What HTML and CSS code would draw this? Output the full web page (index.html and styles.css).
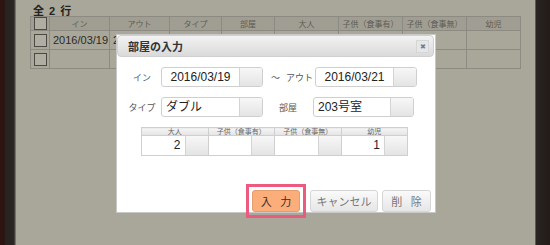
FILE: index.html
```html
<!DOCTYPE html>
<html lang="ja">
<head>
  <meta charset="UTF-8" />
  <meta name="viewport" content="width=device-width, initial-scale=1.0" />
  <title>部屋の入力</title>
  <link rel="stylesheet" href="styles.css">
</head>
<body>
  <div class="frame-left"></div>
  <div class="main">
    <h1 class="count">全 2 行</h1>
    <table class="list">
      <tr>
        <th class="chk"><span class="box"></span></th>
        <th>イン</th>
        <th>アウト</th>
        <th>タイプ</th>
        <th>部屋</th>
        <th>大人</th>
        <th>子供（食事有）</th>
        <th>子供（食事無）</th>
        <th>幼児</th>
      </tr>
      <tr>
        <td class="chk"><span class="box"></span></td>
        <td>2016/03/19</td>
        <td>2016/03/21</td>
        <td></td><td></td><td></td><td></td><td></td><td></td>
      </tr>
      <tr>
        <td class="chk"><span class="box"></span></td>
        <td></td><td></td><td></td><td></td><td></td><td></td><td></td><td></td>
      </tr>
    </table>
  </div>
  <div class="frame-right"></div>

  <div class="dialog">
    <div class="titlebar">
      <span class="title">部屋の入力</span>
      <span class="close">&#x2716;</span>
    </div>
    <div class="dialog-body">
      <div class="row">
        <label class="lbl">イン</label>
        <div class="field">
          <span class="val center">2016/03/19</span>
          <span class="btn-part"></span>
        </div>
        <span class="mid"><span class="tilde">～</span> アウト</span>
        <div class="field">
          <span class="val center">2016/03/21</span>
          <span class="btn-part"></span>
        </div>
      </div>
      <div class="row">
        <label class="lbl">タイプ</label>
        <div class="field">
          <span class="val">ダブル</span>
          <span class="btn-part"></span>
        </div>
        <span class="mid center-lbl">部屋</span>
        <div class="field narrow">
          <span class="val">203号室</span>
          <span class="btn-part"></span>
        </div>
      </div>

      <table class="people">
        <tr>
          <th>大人</th>
          <th>子供（食事有）</th>
          <th>子供（食事無）</th>
          <th>幼児</th>
        </tr>
        <tr>
          <td><div class="num"><span class="nval">2</span><span class="btn-part"></span></div></td>
          <td><div class="num"><span class="nval"></span><span class="btn-part"></span></div></td>
          <td><div class="num"><span class="nval"></span><span class="btn-part"></span></div></td>
          <td><div class="num"><span class="nval">1</span><span class="btn-part"></span></div></td>
        </tr>
      </table>

      <div class="buttons">
        <span class="focus-ring"><button class="btn primary">入 力</button></span>
        <button class="btn cancel">キャンセル</button>
        <button class="btn">削 除</button>
      </div>
    </div>
  </div>
</body>
</html>
```

FILE: styles.css
```css
body {
  margin: 0;
  width: 550px;
  height: 245px;
  overflow: hidden;
  display: flex;
  background-color: #a9a799;
  font-family: "Liberation Sans", "Noto Sans CJK JP", sans-serif;
  color: #2b2a26;
}
.frame-left {
  width: 16px;
  background: linear-gradient(to right, #2c1410 0, #2c1410 5px, #252220 5px, #2a2725 14px, #5a5850 15px, #8f8d82 16px);
}
.frame-right {
  width: 15px;
  background: linear-gradient(to right, #8f8d82 0, #2a2422 1px, #231b17 15px);
}
.main {
  flex: 1;
  padding-left: 14px;
}
.count {
  margin: 0;
  padding: 6px 0 0 3px;
  height: 10px;
  font-size: 11px;
  line-height: 10px;
  font-weight: bold;
  color: #24231f;
  letter-spacing: 1px;
}
.list {
  border-collapse: collapse;
  width: 491px;
  table-layout: fixed;
}
.list th, .list td {
  border: 1px solid #8d8b81;
  padding: 0;
  overflow: hidden;
  white-space: nowrap;
}
.list th {
  height: 12px;
  font-size: 8px;
  font-weight: normal;
  color: #5e5c55;
  background-color: #a09e92;
}
.list td {
  height: 18px;
  font-size: 11px;
  padding-left: 3px;
  background-color: #a9a799;
}
.list th:nth-child(1) { width: 18px; }
.list th:nth-child(2) { width: 59px; }
.list th:nth-child(3) { width: 59px; }
.list th:nth-child(4) { width: 51px; }
.list th:nth-child(5) { width: 52px; }
.list th:nth-child(6) { width: 63px; }
.list th:nth-child(7) { width: 63px; }
.list th:nth-child(8) { width: 63px; }
.list .chk {
  padding: 0;
  text-align: center;
}
.box {
  display: inline-block;
  width: 11px;
  height: 11px;
  border: 1px solid #4a4944;
  background-color: #b0aea2;
  vertical-align: middle;
}

.dialog {
  position: absolute;
  left: 116px;
  top: 34px;
  width: 317px;
  height: 177px;
  background-color: #fff;
  border: 1px solid #c8c8c8;
  padding: 0 1px 0 0;
}
.titlebar {
  display: flex;
  align-items: center;
  justify-content: space-between;
  height: 20px;
  border: 1px solid #d0d0d0;
  border-radius: 4px;
  background: linear-gradient(#f2f2f2, #dadada);
  padding: 0 4px 0 10px;
}
.title {
  font-family: "Noto Sans CJK JP", sans-serif;
  font-size: 11px;
  font-weight: bold;
  color: #333;
}
.close {
  display: inline-block;
  width: 11px;
  height: 11px;
  background-color: #e6e6e6;
  border: 1px solid #d6d6d6;
  font-size: 7px;
  line-height: 11px;
  text-align: center;
  color: #7a7a7a;
}
.dialog-body {
  padding: 10px 0 0 0;
}
.row {
  display: flex;
  align-items: center;
  height: 20px;
  margin-bottom: 10px;
}
.lbl {
  width: 38px;
  margin-left: 6px;
  text-align: center;
  font-family: "Noto Sans CJK JP", sans-serif;
  font-size: 9px;
  color: #555;
}
.mid {
  width: 52px;
  font-family: "Noto Sans CJK JP", sans-serif;
  font-size: 9px;
  color: #555;
  padding-left: 8px;
  box-sizing: border-box;
}
.tilde {
  margin-right: 4px;
}
.mid.center-lbl {
  width: 50px;
  padding-left: 0;
  text-align: center;
}
.field {
  display: flex;
  width: 102px;
  height: 20px;
  box-sizing: border-box;
  border: 1px solid #cfcfcf;
  border-radius: 3px;
  overflow: hidden;
}
.field.narrow {
  width: 101px;
}
.val {
  flex: 1;
  font-size: 12px;
  line-height: 18px;
  padding-left: 4px;
  color: #222;
}
.val.center {
  text-align: center;
  padding-left: 0;
}
.btn-part {
  width: 22px;
  border-left: 1px solid #d4d4d4;
  background: linear-gradient(#f7f7f7, #e4e4e4);
}
.people {
  border-collapse: collapse;
  margin: 0 0 0 24px;
  width: 267px;
  table-layout: fixed;
}
.people th, .people td {
  border: 1px solid #cfcfcf;
  padding: 0;
}
.people th {
  height: 7px;
  font-family: "Noto Sans CJK JP", sans-serif;
  font-size: 7px;
  line-height: 7px;
  font-weight: normal;
  color: #666;
  background: linear-gradient(#f4f4f4, #e4e4e4);
}
.num {
  display: flex;
  height: 19px;
}
.nval {
  flex: 1;
  text-align: right;
  padding-right: 4px;
  font-size: 12px;
  line-height: 19px;
  color: #222;
}
.buttons {
  display: flex;
  justify-content: flex-end;
  align-items: center;
  gap: 4px;
  margin-top: 28px;
  padding-right: 3px;
}
.focus-ring {
  display: flex;
  border: 3px solid #ec5a80;
  padding: 3px;
  margin-right: -4px;
}
.btn {
  height: 22px;
  padding: 0;
  border: 1px solid #d6d6d6;
  border-radius: 3px;
  background: linear-gradient(#fafafa, #e6e6e6);
  font-family: "Noto Sans CJK JP", sans-serif;
  font-size: 11px;
  letter-spacing: 3px;
  text-indent: 3px;
  color: #777;
  width: 49px;
}
.btn.cancel {
  width: 68px;
  letter-spacing: 0;
  text-indent: 0;
  margin-left: 4px;
}
.btn.primary {
  width: 48px;
  background: #fbad7a;
  border-color: #e39c6c;
  color: #333;
}
```
